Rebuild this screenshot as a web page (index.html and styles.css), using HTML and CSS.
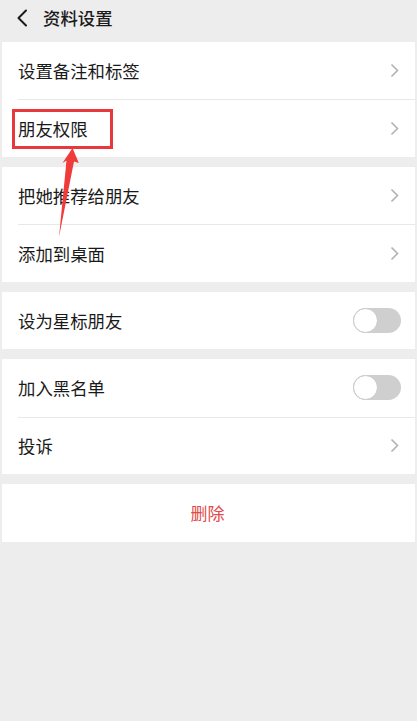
FILE: index.html
```html
<!DOCTYPE html>
<html lang="zh-CN">
<head>
<meta charset="utf-8">
<title>资料设置</title>
<link rel="stylesheet" href="styles.css">
</head>
<body>
<div class="page">
  <header class="topbar">
    <svg class="back" width="12" height="18" viewBox="0 0 12 18"><polyline points="10,1.5 2.5,9 10,16.5" fill="none" stroke="#1a1a1a" stroke-width="2" stroke-linecap="round" stroke-linejoin="round"/></svg>
    <span class="title">资料设置</span>
  </header>

  <section class="group">
    <div class="row"><div class="row-inner"><span class="label">设置备注和标签</span><svg class="chev" width="9" height="15" viewBox="0 0 9 15"><polyline points="1.5,1.5 7.5,7.5 1.5,13.5" fill="none" stroke="#b2b2b2" stroke-width="1.6"/></svg></div></div>
    <div class="row"><div class="row-inner"><span class="label">朋友权限</span><svg class="chev" width="9" height="15" viewBox="0 0 9 15"><polyline points="1.5,1.5 7.5,7.5 1.5,13.5" fill="none" stroke="#b2b2b2" stroke-width="1.6"/></svg></div></div>
  </section>

  <section class="group">
    <div class="row"><div class="row-inner"><span class="label">把她推荐给朋友</span><svg class="chev" width="9" height="15" viewBox="0 0 9 15"><polyline points="1.5,1.5 7.5,7.5 1.5,13.5" fill="none" stroke="#b2b2b2" stroke-width="1.6"/></svg></div></div>
    <div class="row"><div class="row-inner"><span class="label">添加到桌面</span><svg class="chev" width="9" height="15" viewBox="0 0 9 15"><polyline points="1.5,1.5 7.5,7.5 1.5,13.5" fill="none" stroke="#b2b2b2" stroke-width="1.6"/></svg></div></div>
  </section>

  <section class="group">
    <div class="row"><div class="row-inner toggle-row"><span class="label">设为星标朋友</span><span class="switch"><span class="knob"></span></span></div></div>
  </section>

  <section class="group">
    <div class="row"><div class="row-inner toggle-row"><span class="label">加入黑名单</span><span class="switch"><span class="knob"></span></span></div></div>
    <div class="row"><div class="row-inner"><span class="label">投诉</span><svg class="chev" width="9" height="15" viewBox="0 0 9 15"><polyline points="1.5,1.5 7.5,7.5 1.5,13.5" fill="none" stroke="#b2b2b2" stroke-width="1.6"/></svg></div></div>
  </section>

  <section class="group">
    <div class="delete">删除</div>
  </section>

  <div class="mark-box"></div>
  <svg class="mark-arrow" width="30" height="100" viewBox="0 0 30 100">
    <polygon points="22.5,0 28.8,15 24,13.5 9,89 16.5,12.5 12.5,15" fill="#f03b3b"/>
  </svg>
</div>
</body>
</html>
```

FILE: styles.css
```css
html, body {
  margin: 0;
  padding: 0;
}
body {
  background: #ededed;
  font-family: "Noto Sans CJK SC", "Noto Sans", sans-serif;
  color: #1a1a1a;
}
.page {
  position: relative;
  width: 417px;
  min-height: 721px;
}
.topbar {
  height: 35px;
  margin-bottom: 6.5px;
  display: flex;
  align-items: center;
  padding-left: 16px;
  gap: 15px;
}
.back {
  display: block;
}
.title {
  font-size: 17.4px;
  font-weight: 500;
  line-height: 1;
}
.group {
  background: #ffffff;
  margin: 0 2px 10px 2px;
}
.row {
  padding-left: 16px;
}
.row-inner {
  height: 57.5px;
  box-sizing: border-box;
  display: flex;
  align-items: center;
  justify-content: space-between;
  padding-right: 16px;
}
.row + .row .row-inner {
  border-top: 1px solid #e8e8e8;
}
.toggle-row {
  padding-right: 14px;
}
.label {
  font-size: 17.4px;
  line-height: 1;
}
.chev {
  display: block;
}
.switch {
  position: relative;
  width: 48px;
  height: 25px;
  border-radius: 13px;
  background: #cfcfcf;
}
.knob {
  position: absolute;
  left: 0;
  top: 0;
  width: 25px;
  height: 25px;
  box-sizing: border-box;
  border-radius: 50%;
  background: #ffffff;
  border: 1px solid #c8c8c8;
}
.delete {
  height: 57.5px;
  display: flex;
  align-items: center;
  justify-content: center;
  font-size: 17px;
  color: #e24a4a;
  padding-right: 2px;
}
.mark-box {
  position: absolute;
  left: 12px;
  top: 109px;
  width: 101px;
  height: 40px;
  box-sizing: border-box;
  border: 3px solid #e8383b;
}
.mark-arrow {
  position: absolute;
  left: 50px;
  top: 148px;
}
```
